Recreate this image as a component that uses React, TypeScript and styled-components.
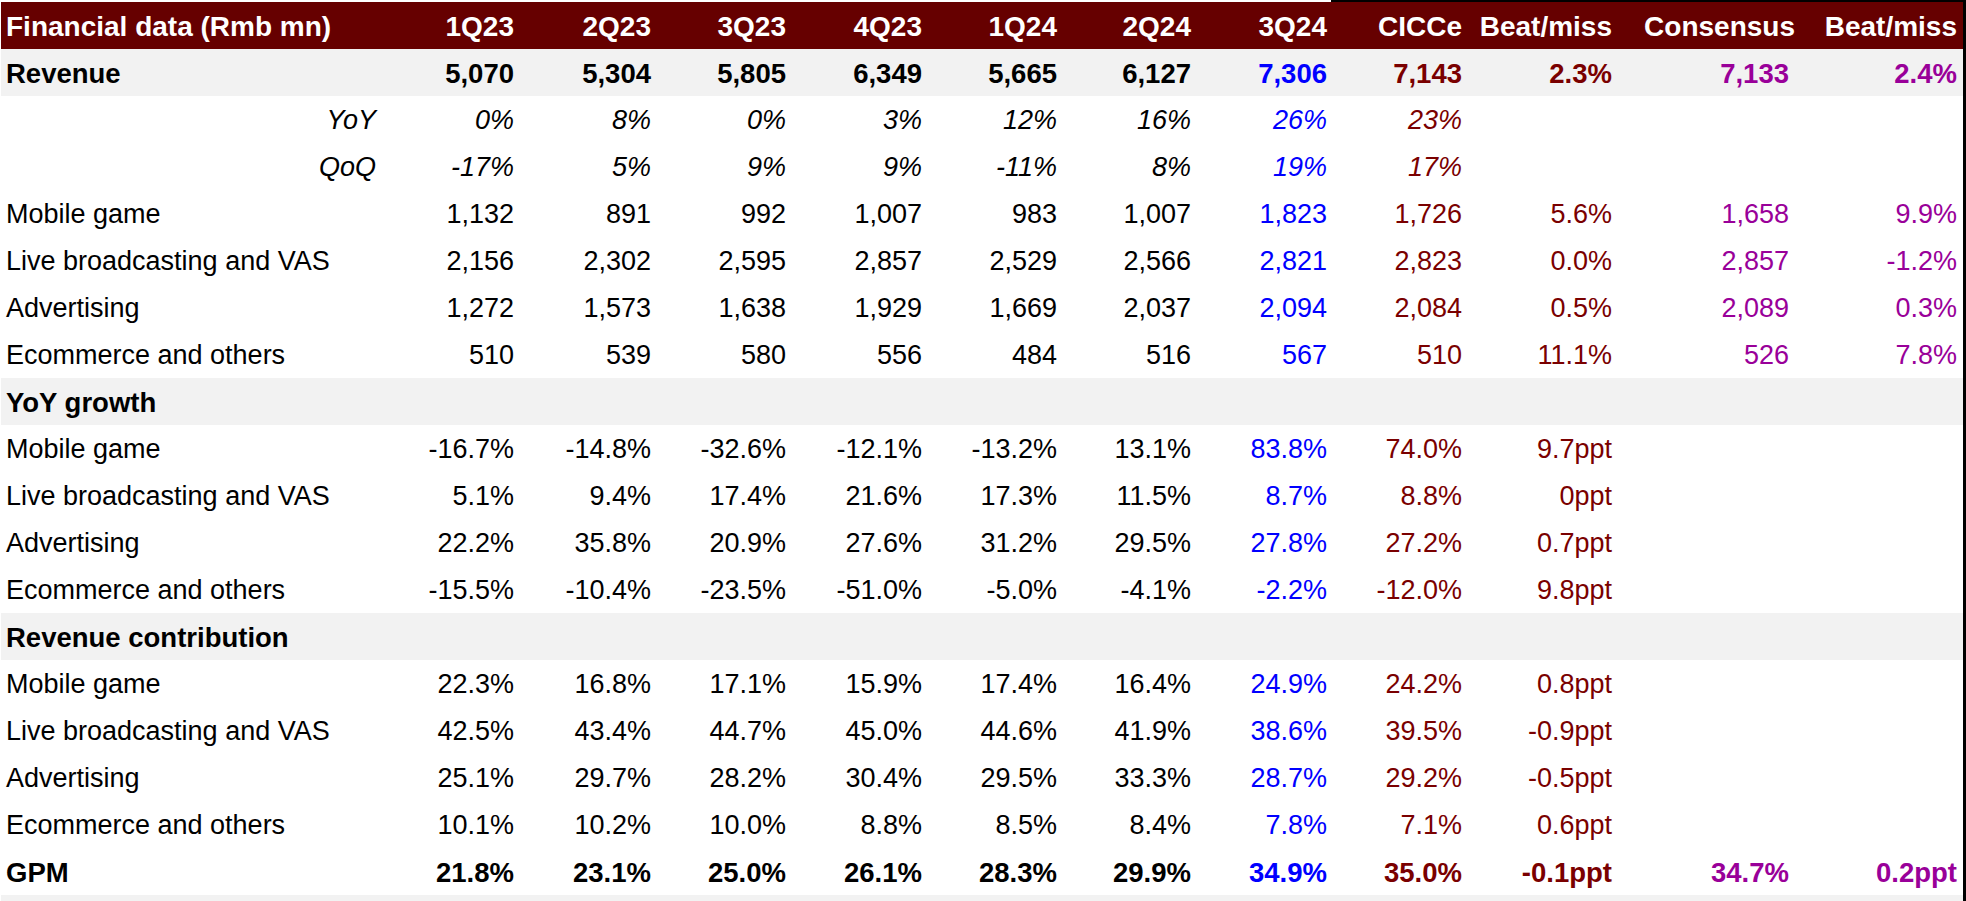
import React from 'react';
import styled, { createGlobalStyle } from 'styled-components';

type Tone = 'head' | 'band' | 'plain';
type Kind = 'bold' | 'plain' | 'italic';

interface Line {
    label: string;
    values: string[];
    tone: Tone;
    kind: Kind;
}

const HEADINGS = ['1Q23', '2Q23', '3Q23', '4Q23', '1Q24', '2Q24', '3Q24', 'CICCe', 'Beat/miss', 'Consensus', 'Beat/miss'];

// colour of each value column, left to right
const COLUMN_COLORS = ['#000', '#000', '#000', '#000', '#000', '#000', '#0000ff', '#7a0000', '#7a0000', '#990099', '#990099'];

const LINES: Line[] = [
    { label: 'Revenue', tone: 'band', kind: 'bold', values: ['5,070', '5,304', '5,805', '6,349', '5,665', '6,127', '7,306', '7,143', '2.3%', '7,133', '2.4%'] },
    { label: 'YoY', tone: 'plain', kind: 'italic', values: ['0%', '8%', '0%', '3%', '12%', '16%', '26%', '23%', '', '', ''] },
    { label: 'QoQ', tone: 'plain', kind: 'italic', values: ['-17%', '5%', '9%', '9%', '-11%', '8%', '19%', '17%', '', '', ''] },
    { label: 'Mobile game', tone: 'plain', kind: 'plain', values: ['1,132', '891', '992', '1,007', '983', '1,007', '1,823', '1,726', '5.6%', '1,658', '9.9%'] },
    { label: 'Live broadcasting and VAS', tone: 'plain', kind: 'plain', values: ['2,156', '2,302', '2,595', '2,857', '2,529', '2,566', '2,821', '2,823', '0.0%', '2,857', '-1.2%'] },
    { label: 'Advertising', tone: 'plain', kind: 'plain', values: ['1,272', '1,573', '1,638', '1,929', '1,669', '2,037', '2,094', '2,084', '0.5%', '2,089', '0.3%'] },
    { label: 'Ecommerce and others', tone: 'plain', kind: 'plain', values: ['510', '539', '580', '556', '484', '516', '567', '510', '11.1%', '526', '7.8%'] },
    { label: 'YoY growth', tone: 'band', kind: 'bold', values: [] },
    { label: 'Mobile game', tone: 'plain', kind: 'plain', values: ['-16.7%', '-14.8%', '-32.6%', '-12.1%', '-13.2%', '13.1%', '83.8%', '74.0%', '9.7ppt', '', ''] },
    { label: 'Live broadcasting and VAS', tone: 'plain', kind: 'plain', values: ['5.1%', '9.4%', '17.4%', '21.6%', '17.3%', '11.5%', '8.7%', '8.8%', '0ppt', '', ''] },
    { label: 'Advertising', tone: 'plain', kind: 'plain', values: ['22.2%', '35.8%', '20.9%', '27.6%', '31.2%', '29.5%', '27.8%', '27.2%', '0.7ppt', '', ''] },
    { label: 'Ecommerce and others', tone: 'plain', kind: 'plain', values: ['-15.5%', '-10.4%', '-23.5%', '-51.0%', '-5.0%', '-4.1%', '-2.2%', '-12.0%', '9.8ppt', '', ''] },
    { label: 'Revenue contribution', tone: 'band', kind: 'bold', values: [] },
    { label: 'Mobile game', tone: 'plain', kind: 'plain', values: ['22.3%', '16.8%', '17.1%', '15.9%', '17.4%', '16.4%', '24.9%', '24.2%', '0.8ppt', '', ''] },
    { label: 'Live broadcasting and VAS', tone: 'plain', kind: 'plain', values: ['42.5%', '43.4%', '44.7%', '45.0%', '44.6%', '41.9%', '38.6%', '39.5%', '-0.9ppt', '', ''] },
    { label: 'Advertising', tone: 'plain', kind: 'plain', values: ['25.1%', '29.7%', '28.2%', '30.4%', '29.5%', '33.3%', '28.7%', '29.2%', '-0.5ppt', '', ''] },
    { label: 'Ecommerce and others', tone: 'plain', kind: 'plain', values: ['10.1%', '10.2%', '10.0%', '8.8%', '8.5%', '8.4%', '7.8%', '7.1%', '0.6ppt', '', ''] },
    { label: 'GPM', tone: 'plain', kind: 'bold', values: ['21.8%', '23.1%', '25.0%', '26.1%', '28.3%', '29.9%', '34.9%', '35.0%', '-0.1ppt', '34.7%', '0.2ppt'] },
    { label: '', tone: 'band', kind: 'plain', values: [] },
];

const App: React.FC = () => {
    return (
        <>
            <GlobalStyle />
            <Page>
                <TopEdge>
                    <TopGap />
                    <TopRule />
                </TopEdge>
                <Sheet>
                    <Table>
                        <Row $tone="head">
                            <LabelCell $kind="head" $color="#fff">Financial data (Rmb mn)</LabelCell>
                            {HEADINGS.map((h, i) => (
                                <Cell key={i} $kind="head" $color="#fff" $nudge={h === 'Consensus' ? 6 : 0}>
                                    {h}
                                </Cell>
                            ))}
                        </Row>
                        {LINES.map((line, r) => (
                            <Row key={r} $tone={line.tone}>
                                <LabelCell $kind={line.kind} $color="#000">{line.label}</LabelCell>
                                {COLUMN_COLORS.map((c, i) => (
                                    <Cell key={i} $kind={line.kind} $color={c} $nudge={0}>
                                        {line.values[i] ?? ''}
                                    </Cell>
                                ))}
                            </Row>
                        ))}
                    </Table>
                    <RightRule />
                </Sheet>
            </Page>
        </>
    );
};

const GlobalStyle = createGlobalStyle`
    html, body {
        margin: 0;
        padding: 0;
        background: #fff;
        overflow: hidden;
    }
    body {
        font-family: "Liberation Sans", Arial, sans-serif;
    }
`;

const Page = styled.div`
    width: 1966px;
    height: 901px;
    overflow: hidden;
`;

const TopEdge = styled.div`
    display: flex;
    height: 2px;
`;

const TopGap = styled.div`
    width: 1331px;
`;

const TopRule = styled.div`
    flex: 1;
    background: #000;
`;

const Sheet = styled.div`
    display: flex;
    align-items: stretch;
`;

const Table = styled.div`
    margin-left: 1px;
    width: 1962px;
    display: flex;
    flex-direction: column;
`;

const RightRule = styled.div`
    width: 3px;
    background: #000;
`;

const TONES: Record<Tone, string> = {
    head: '#660000',
    band: '#f2f2f2',
    plain: '#fff',
};

const SIZES: Record<Kind | 'head', string> = {
    head: '28px',
    bold: '27.5px',
    plain: '27px',
    italic: '27px',
};

const Row = styled.div<{ $tone: Tone }>`
    display: grid;
    grid-template-columns: 378px 138px 137px 135px 136px 135px 134px 136px 135px 150px 177px 171px;
    height: 47px;
    background: ${p => TONES[p.$tone]};
`;

const Cell = styled.div<{ $kind: Kind | 'head'; $color: string; $nudge: number }>`
    box-sizing: border-box;
    padding-top: 2px;
    padding-right: 3px;
    margin-right: ${p => -p.$nudge}px;
    line-height: 45px;
    font-size: ${p => SIZES[p.$kind]};
    text-align: right;
    white-space: nowrap;
    color: ${p => p.$color};
    font-weight: ${p => (p.$kind === 'bold' || p.$kind === 'head' ? 700 : 400)};
    font-style: ${p => (p.$kind === 'italic' ? 'italic' : 'normal')};

    &:last-child {
        padding-right: 6px;
    }
`;

const LabelCell = styled(Cell).attrs({ $nudge: 0 })`
    text-align: ${p => (p.$kind === 'italic' ? 'right' : 'left')};
    padding-left: 5px;
`;

export default App;
